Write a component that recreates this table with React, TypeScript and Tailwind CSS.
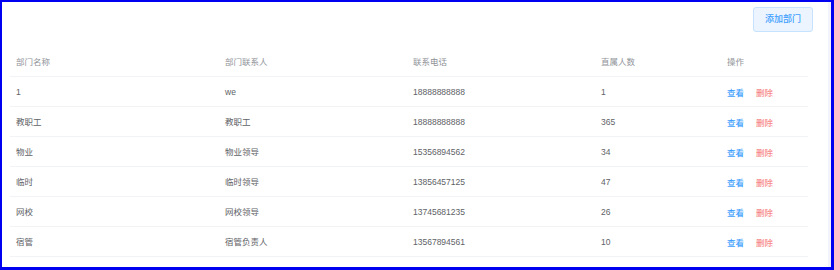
import React from 'react';

type Dept = { name: string; contact: string; phone: string; count: number };

const DEPTS: Dept[] = [
  { name: '1', contact: 'we', phone: '18888888888', count: 1 },
  { name: '教职工', contact: '教职工', phone: '18888888888', count: 365 },
  { name: '物业', contact: '物业领导', phone: '15356894562', count: 34 },
  { name: '临时', contact: '临时领导', phone: '13856457125', count: 47 },
  { name: '网校', contact: '网校领导', phone: '13745681235', count: 26 },
  { name: '宿管', contact: '宿管负责人', phone: '13567894561', count: 10 },
];

const COLS = 'grid grid-cols-[209px_188px_188px_126px_87px] items-center';

export default function App() {
  return (
    <div
      className="flex h-[270px] w-[834px] border-b-[3px] border-l-2 border-r-[3px] border-t-2 border-[#0000f0] bg-white"
      style={{ fontFamily: '"Liberation Sans", "Noto Sans CJK SC", sans-serif' }}
    >
      <div className="flex-1 pl-2 pr-[15px] pt-[5px]">
        <div className="flex justify-end">
          <button className="h-[25px] w-[60px] rounded-[3px] border border-[#c6e2ff] bg-[#ecf5ff] text-[9px] font-medium text-[#409eff]">
            添加部门
          </button>
        </div>

        <div className="mt-[15px] w-[798px] text-[8.5px]">
          <div className={`${COLS} h-[30px] border-b border-[#f2f3f6] pt-[1px] text-[#909399]`}>
            <div className="px-[6px]">部门名称</div>
            <div className="px-[6px]">部门联系人</div>
            <div className="px-[6px]">联系电话</div>
            <div className="px-[6px]">直属人数</div>
            <div className="px-[6px]">操作</div>
          </div>
          {DEPTS.map((d) => (
            <div key={d.name} className={`${COLS} h-[30px] border-b border-[#f2f3f6] pt-[1px] text-[#606266]`}>
              <div className="px-[6px]">{d.name}</div>
              <div className="px-[6px]">{d.contact}</div>
              <div className="px-[6px]">{d.phone}</div>
              <div className="px-[6px]">{d.count}</div>
              <div className="flex gap-[12px] px-[6px] pt-[3px] font-medium">
                <span className="text-[#409eff]">查看</span>
                <span className="text-[#f78989]">删除</span>
              </div>
            </div>
          ))}
        </div>
      </div>
      <div className="w-[3px] bg-[#f3f3fb]" />
    </div>
  );
}
